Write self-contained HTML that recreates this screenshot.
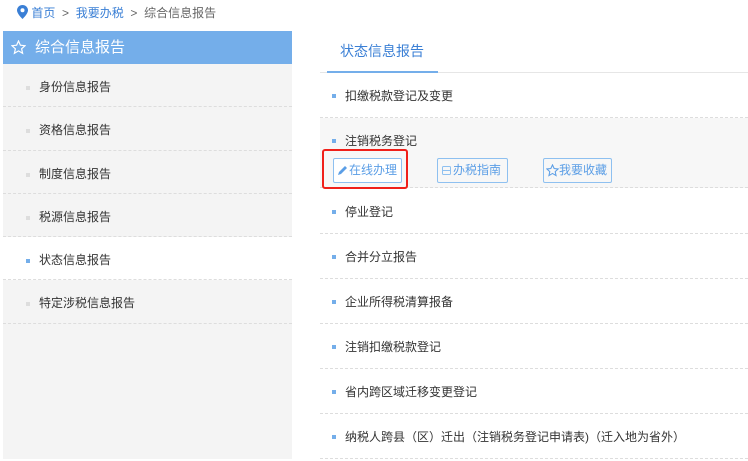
<!DOCTYPE html>
<html><head><meta charset="utf-8"><style>
*{margin:0;padding:0;box-sizing:border-box}
body{width:748px;height:459px;overflow:hidden;background:#fff;font-family:"Liberation Sans","Noto Sans CJK SC",sans-serif;font-size:12px;color:#333;position:relative}
.a{position:absolute}
.crumb{top:4px;left:17px;font-size:12px;color:#666;white-space:nowrap}
.crumb b{font-weight:normal;color:#3a7fd5}
.side{left:3px;top:31px;width:289px;height:428px;background:#f4f4f4}
.sh{height:33px;background:#74aeea;color:#fff;font-size:15px;line-height:33px;padding-left:32px;position:relative}
.si{height:43.3px;line-height:46px;padding-left:36px;border-bottom:1px dashed #ddd;position:relative;color:#333}
.si:before{content:"";position:absolute;left:23px;top:22px;width:4px;height:4px;background:#ddd}
.si.on{background:#fff}.si.on:before{background:#74aeea}
.tab{left:340px;top:41px;font-size:14px;color:#3a7fd5}
.tl{left:320px;top:72px;width:428px;height:1px;background:#e6e6e6}
.tu{left:327px;top:71px;width:111px;height:2px;background:#74aeea}
.row{left:320px;width:428px;border-bottom:1px dashed #ddd;padding-left:25px;position:absolute;line-height:47px}
.row:before{content:"";position:absolute;left:12px;top:21px;width:4px;height:4px;background:#74aeea}
.btn{position:absolute;top:158px;height:25px;border:1px solid #8ec0f0;border-radius:2px;color:#5b9ee6;line-height:23px;font-size:12px;padding-left:15px}
</style></head><body>
<div class="a crumb"><svg width="11" height="14" viewBox="0 0 11 14" style="vertical-align:-2px"><path d="M5.5 0C2.5 0 0 2.4 0 5.3 0 9 5.5 14 5.5 14S11 9 11 5.3C11 2.4 8.5 0 5.5 0z" fill="#3a7fd5"/><circle cx="5.5" cy="5.2" r="2" fill="#fff"/></svg> <b>首页</b> &nbsp;&gt;&nbsp; <b>我要办税</b> &nbsp;&gt;&nbsp; 综合信息报告</div>
<div class="a side">
<div class="sh"><svg class="a" style="left:8px;top:9px" width="15" height="15" viewBox="0 0 15 15"><path d="M7.5 1l1.9 4.2 4.6.5-3.4 3.1 1 4.5-4.1-2.4-4.1 2.4 1-4.5L1 5.7l4.6-.5z" fill="none" stroke="#fff" stroke-width="1.2"/></svg>综合信息报告</div>
<div class="si">身份信息报告</div>
<div class="si">资格信息报告</div>
<div class="si">制度信息报告</div>
<div class="si">税源信息报告</div>
<div class="si on">状态信息报告</div>
<div class="si">特定涉税信息报告</div>
</div>
<div class="a tab">状态信息报告</div>
<div class="a tl"></div><div class="a tu"></div>
<div class="row" style="top:73px;height:45px">扣缴税款登记及变更</div>
<div class="row" style="top:118px;height:70px;background:#f7f7f7">注销税务登记</div>
<div class="a" style="left:322px;top:149px;width:86px;height:40px;border:2px solid #f0201a;border-radius:3px"></div>
<div class="btn" style="left:333px;width:69px;background:#fff"><svg class="a" style="left:3px;top:6px" width="11" height="11" viewBox="0 0 11 11"><path d="M1 10l1-3 6-6 2 2-6 6z" fill="#5b9ee6"/></svg>在线办理</div>
<div class="btn" style="left:437px;width:71px"><svg class="a" style="left:3px;top:6px" width="11" height="11" viewBox="0 0 11 11"><rect x="1.5" y="1.5" width="8" height="8" rx="1" fill="none" stroke="#8ec0f0"/><path d="M1.5 5.5h8" stroke="#8ec0f0"/></svg>办税指南</div>
<div class="btn" style="left:543px;width:69px"><svg class="a" style="left:2px;top:5px" width="13" height="13" viewBox="0 0 15 15"><path d="M7.5 1l1.9 4.2 4.6.5-3.4 3.1 1 4.5-4.1-2.4-4.1 2.4 1-4.5L1 5.7l4.6-.5z" fill="none" stroke="#5b9ee6" stroke-width="1.2"/></svg>我要收藏</div>
<div class="row" style="top:189px;height:45px">停业登记</div>
<div class="row" style="top:234px;height:45px">合并分立报告</div>
<div class="row" style="top:279px;height:45px">企业所得税清算报备</div>
<div class="row" style="top:324px;height:45px">注销扣缴税款登记</div>
<div class="row" style="top:369px;height:45px">省内跨区域迁移变更登记</div>
<div class="row" style="top:414px;height:45px">纳税人跨县（区）迁出（注销税务登记申请表)（迁入地为省外）</div>
</body></html>
